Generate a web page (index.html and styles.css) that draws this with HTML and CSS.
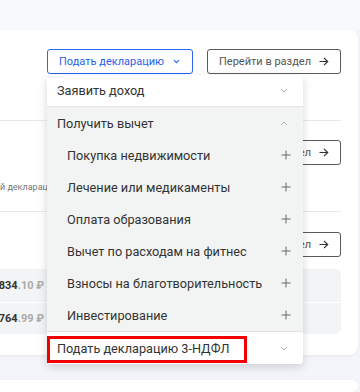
FILE: index.html
```html
<!DOCTYPE html>
<html lang="ru">
<head>
<meta charset="utf-8">
<link rel="stylesheet" href="styles.css">
</head>
<body>
<div class="top"></div>
<div class="card">
  <div class="row row1">
    <div class="actions">
      <div class="dd">
        <button class="btn btn-primary">Подать декларацию
          <svg class="ic-chev" width="7" height="5" viewBox="0 0 7 5"><path d="M1 1.2l2.5 2.5L6 1.2" fill="none" stroke="currentColor" stroke-width="1.1"/></svg>
        </button>
        <div class="menu">
          <div class="mi mi-top">Заявить доход
            <svg class="ic-small" width="8" height="5" viewBox="0 0 8 5"><path d="M1 1l3 3 3-3" fill="none" stroke="currentColor" stroke-width="1"/></svg>
          </div>
          <div class="group">
            <div class="mi">Получить вычет
              <svg class="ic-small" width="8" height="5" viewBox="0 0 8 5"><path d="M1 4l3-3 3 3" fill="none" stroke="currentColor" stroke-width="1"/></svg>
            </div>
            <div class="mi sub">Покупка недвижимости<svg class="ic-plus" width="10" height="10" viewBox="0 0 10 10"><path d="M5 0.5v9M0.5 5h9" stroke="currentColor" stroke-width="1"/></svg></div>
            <div class="mi sub">Лечение или медикаменты<svg class="ic-plus" width="10" height="10" viewBox="0 0 10 10"><path d="M5 0.5v9M0.5 5h9" stroke="currentColor" stroke-width="1"/></svg></div>
            <div class="mi sub">Оплата образования<svg class="ic-plus" width="10" height="10" viewBox="0 0 10 10"><path d="M5 0.5v9M0.5 5h9" stroke="currentColor" stroke-width="1"/></svg></div>
            <div class="mi sub">Вычет по расходам на фитнес<svg class="ic-plus" width="10" height="10" viewBox="0 0 10 10"><path d="M5 0.5v9M0.5 5h9" stroke="currentColor" stroke-width="1"/></svg></div>
            <div class="mi sub">Взносы на благотворительность<svg class="ic-plus" width="10" height="10" viewBox="0 0 10 10"><path d="M5 0.5v9M0.5 5h9" stroke="currentColor" stroke-width="1"/></svg></div>
            <div class="mi sub">Инвестирование<svg class="ic-plus" width="10" height="10" viewBox="0 0 10 10"><path d="M5 0.5v9M0.5 5h9" stroke="currentColor" stroke-width="1"/></svg></div>
          </div>
          <div class="mi mi-last">Подать декларацию 3-НДФЛ
            <svg class="ic-small" width="8" height="5" viewBox="0 0 8 5"><path d="M1 1l3 3 3-3" fill="none" stroke="currentColor" stroke-width="1"/></svg>
            <span class="highlight"></span>
          </div>
        </div>
      </div>
      <button class="btn btn-outline">Перейти в раздел
        <svg class="ic-arrow" width="10" height="9" viewBox="0 0 10 9"><path d="M0.5 4.5h8.5M5 0.8l3.7 3.7L5 8.2" fill="none" stroke="currentColor" stroke-width="1.2"/></svg>
      </button>
    </div>
  </div>
  <div class="row row2">
    <div class="actions">
      <button class="btn btn-outline">Перейти в раздел
        <svg class="ic-arrow" width="10" height="9" viewBox="0 0 10 9"><path d="M0.5 4.5h8.5M5 0.8l3.7 3.7L5 8.2" fill="none" stroke="currentColor" stroke-width="1.2"/></svg>
      </button>
    </div>
    <div class="note">Статус налоговой декларации</div>
  </div>
  <div class="row row3">
    <div class="actions">
      <button class="btn btn-outline">Перейти в раздел
        <svg class="ic-arrow" width="10" height="9" viewBox="0 0 10 9"><path d="M0.5 4.5h8.5M5 0.8l3.7 3.7L5 8.2" fill="none" stroke="currentColor" stroke-width="1.2"/></svg>
      </button>
    </div>
    <div class="amounts">
      <div class="amount-row"><span class="amount">1 245 834<span class="dec">.10 ₽</span></span></div>
      <div class="amount-row"><span class="amount">1 123 764<span class="dec">.99 ₽</span></span></div>
    </div>
  </div>
</div>
<div class="card card2"></div>
</body>
</html>
```
FILE: styles.css
```css
* { box-sizing: border-box; }
html, body { margin: 0; padding: 0; }
body {
  background: #f4f5fa;
  font-family: Roboto, "Noto Sans", sans-serif;
  width: 360px;
  height: 392px;
  overflow: hidden;
}
.top {
  height: 30px;
  background: #f8f9fc;
}
.card {
  margin: 0 2px 0 -90px;
  background: #fff;
  border-radius: 8px;
  box-shadow: 0 1px 3px rgba(0, 0, 0, 0.06);
  padding: 0 17px 0 20px;
}
.card2 {
  margin-top: 25px;
  height: 12px;
}
.row {
  border-bottom: 1px solid #e9e9e9;
}
.row1 { height: 91px; padding-top: 19px; }
.row2 { height: 91px; padding-top: 19px; }
.row3 { border-bottom: none; padding: 20px 0 21px; }
.actions {
  display: flex;
  justify-content: flex-end;
  gap: 14px;
}
.btn {
  height: 25px;
  display: flex;
  align-items: center;
  flex-shrink: 0;
  white-space: nowrap;
  font-family: Roboto, sans-serif;
  font-size: 11px;
  border-radius: 3px;
  background: #fff;
  padding: 0 11px 0 11px;
  cursor: pointer;
}
.btn-primary {
  width: 146px;
  border: 1px solid #2b66f2;
  color: #2560ee;
  justify-content: space-between;
  padding-right: 12px;
}
.btn-outline {
  width: 134px;
  border: 1px solid #5a5a5a;
  color: #555;
  justify-content: space-between;
}
.ic-chev { color: #2560ee; }
.ic-arrow { color: #333; }
.dd { position: relative; }
.menu {
  position: absolute;
  top: calc(100% + 1px);
  left: 0;
  width: 256px;
  background: #fff;
  border-radius: 4px;
  box-shadow: 0 3px 10px rgba(0, 0, 0, 0.16);
  z-index: 10;
}
.mi {
  height: 32px;
  display: flex;
  align-items: center;
  justify-content: space-between;
  padding: 0 13px 0 10px;
  font-size: 12.7px;
  color: #333;
  position: relative;
  white-space: nowrap;
}
.mi-top {
  border-bottom: 1px solid #e6e6e6;
  border-radius: 4px 4px 0 0;
}
.group { background: #f2f3f3; }
.mi.sub { padding-left: 20px; padding-right: 12px; }
.mi-last {
  border-top: 1px solid #e6e6e6;
  border-radius: 0 0 4px 4px;
  height: 33px;
}
.ic-small { color: #b0b0b0; margin-right: 2px; }
.ic-plus { color: #666; }
.highlight {
  position: absolute;
  left: 0;
  top: 4px;
  width: 200px;
  height: 27px;
  border: 3px solid #f20000;
}
.note {
  margin-top: 17px;
  font-size: 9px;
  color: #777;
}
.amounts {
  margin-top: 12px;
  background: #f3f4f5;
  border-radius: 6px;
}
.amount-row {
  height: 33px;
  display: flex;
  align-items: center;
}
.amount-row + .amount-row {
  border-top: 1px solid #fff;
  height: 32px;
}
.amount {
  width: 114px;
  text-align: right;
  font-size: 11px;
  font-weight: 700;
  color: #333;
}
.dec { color: #aaa; }
```
